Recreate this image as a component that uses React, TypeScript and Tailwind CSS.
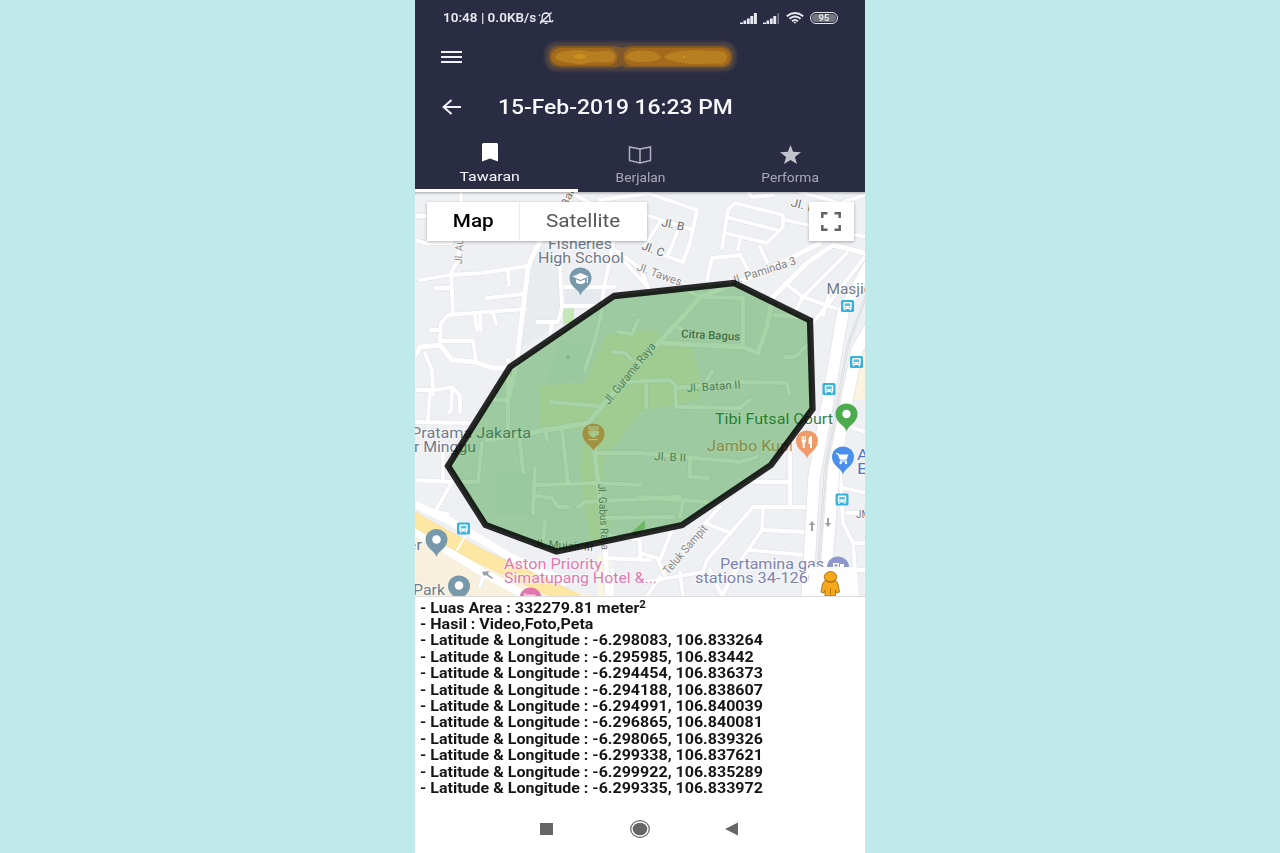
import React from "react";

const coordinates = [
  "-6.298083, 106.833264",
  "-6.295985, 106.83442",
  "-6.294454, 106.836373",
  "-6.294188, 106.838607",
  "-6.294991, 106.840039",
  "-6.296865, 106.840081",
  "-6.298065, 106.839326",
  "-6.299338, 106.837621",
  "-6.299922, 106.835289",
  "-6.299335, 106.833972",
];

const minorRoads = [
  "M415 216H430 M461 190V240L457 262L451 273L453 313",
  "M420 280L450 275L482 273L528 266 M435 288H451 M508 270L509 285 M487 298L523 294",
  "M440 342L441 323L448 315L525 309 M431 330H440 M475 315L477 330 M480 315L481 330 M493 313L496 324",
  "M440 341H473L476 360 M425 353L432 370L433 395 M415 390H435L452 387L460 396V412",
  "M415 240L425 243H452 M560 267L562 307L558 322H537 M565 287H615 M562 306H602 M602 310L595 340L585 370",
  "M615 235L603 293L602 310 M552 323L550 334 M590 232L615 250L640 268L647 285",
  "M653 195L697 210L690 243L683 262L660 254 M640 213L693 230 M678 230L668 255 M660 222L645 245",
  "M600 200L650 193 M570 192L590 203 M625 262L650 290",
  "M722 248L728 210L735 203L783 215V227L767 243L725 233 M730 218L777 230 M740 240L738 249 M760 247L767 262",
  "M707 280L712 258L740 255L748 270 M748 192L752 197L773 195 M800 192L840 203L865 195 M785 220L865 237",
  "M785 283L803 297L840 310 M847 253L803 297L793 315 M813 323L865 257 M823 315L830 290",
  "M700 297L743 298V347 M680 287L700 297L733 283 M677 327L690 333 M775 315L807 318 M785 357H795L807 345",
  "M626 382L670 380L675 385L676 407L740 408L750 400 M646 383V408 M675 388L740 382L787 383L789 394",
  "M707 380L712 371 M638 320L632 334L618 332 M614 352L625 353L632 360",
  "M508 360V430 M493 400H508 M551 402L598 406 M562 430L568 483 M520 440L523 472 M545 428L547 440",
  "M535 468L533 513 M537 485L598 483L640 485 M537 496L552 498L558 507H568 M578 507L585 502L680 497",
  "M595 453H640L740 462L757 457 M690 460V477L708 478 M482 443L478 482H462 M545 522L543 540 M602 518L673 517",
  "M640 497L707 502 M683 500L680 517 M430 390L428 422 M452 390L451 410L449 413 M415 422L468 423",
  "M415 480L452 482L435 512 M443 453V480 M753 482H790 M790 453V505",
  "M807 507H753L707 560L703 572L640 583 M763 507L762 530L743 557L722 596 M763 530L807 532 M750 550L803 555",
  "M720 507L705 523L728 532 M673 527L660 560 M640 553L657 558L665 575 M660 577L647 596 M680 573L683 596 M710 570L722 596",
  "M610 535L640 540V560 M605 558L650 560 M612 570V596 M840 465L843 523L853 543L857 596 M865 493L840 487 M847 513H865 M853 543H865 M855 570H865 M840 423L865 432",
  "M484 575L480 586 M435 512L448 514",
];

const mainRoads = [
  "M541 240L532 257L528 268L518 350L516 367L508 400",
  "M415 355L420 347L440 345L452 360L475 362L492 368H512",
  "M865 253L833 245L807 263L773 297L767 327L758 353L743 347L660 343",
  "M820 243L787 260L740 282L700 297L680 320L640 362L603 405L588 423L487 440",
  "M594 445L598 483L605 547L608 596",
];

const area = "614,296 734,283 810,320.5 812.5,409 771,465 682,525 556.5,551.5 485.5,525 448,466 510,367";

function Pin({ x, y, fill, children }: { x: number; y: number; fill: string; children?: React.ReactNode }) {
  return (
    <g transform={`translate(${x} ${y})`}>
      <path d="M0 16.5C-1 10.500-11 8-11-1A11 10.500 0 0 1 11-1C11 8 1 10.500 0 16.500Z" fill={fill} />
      {children}
    </g>
  );
}

function BusStop({ x, y }: { x: number; y: number }) {
  return (
    <g transform={`translate(${x} ${y})`}>
      <rect x="-6.5" y="-6" width="13" height="12" rx="1.5" fill="#35b3de" />
      <rect x="-4.2" y="-4" width="8.4" height="7" rx="1.2" fill="#fff" />
      <rect x="-2.8" y="-2.6" width="5.6" height="2.6" fill="#52bfe4" />
      <path d="M-2.7 1.6h1.2M1.5 1.6h1.2" stroke="#35b3de" strokeWidth="1" />
      <path d="M-3.6 3h1.6v1.3h-1.6zM2 3h1.6v1.3H2z" fill="#fff" />
    </g>
  );
}

type LabelProps = {
  x: number;
  y: number;
  w: number;
  size?: number;
  fill?: string;
  rotate?: number;
  weight?: number;
  children: string;
};

function Label({ x, y, w, size = 14, fill = "#6f7a8a", rotate = 0, weight = 400, children }: LabelProps) {
  return (
    <text
      transform={`translate(${x} ${y}) rotate(${rotate})`}
      textLength={w}
      lengthAdjust="spacingAndGlyphs"
      fontSize={size}
      fontWeight={weight}
      fill={fill}
      stroke="#fff"
      strokeOpacity="0.6"
      strokeWidth="2"
      strokeLinejoin="round"
      paintOrder="stroke"
    >
      {children}
    </text>
  );
}

function AreaMap() {
  return (
    <svg viewBox="415 192 450 404" className="block h-full w-full font-[Roboto,sans-serif]">
      <rect x="415" y="192" width="450" height="404" fill="#eff0f3" />
      <path d="M541 245L561 265V310L545 335L516 350L530 265Z" fill="#e8ecef" />
      <path d="M565 288H602V306H565Z" fill="#e6eaee" />
      <path d="M495 470H535V515H495ZM560 340L590 345L582 380L545 385Z" fill="#ebeef1" />
      <path d="M563 308H574V322L563 325Z" fill="#c5e8b7" />
      <path
        d="M605 335L650 330L690 345L700 375L700 400L655 408L640 412L620 440L605 455L600 500L612 520L605 545L590 540L580 470L585 430L540 428L540 385L585 383Z"
        fill="#f3f1dc"
      />
      <path d="M632 532L645 520V528L634 537Z" fill="#a8d29b" />
      <path d="M850 400L856 350L865 330V400Z" fill="#fbf3dd" />
      <path d="M415 532L560 596H415Z" fill="#f8f0dc" />
      <path d="M540 590L520 575L565 590L600 596H530Z" fill="#fbf1d8" />
      <path d="M598 555H612V596H598Z" fill="#fbf5e4" />

      <g fill="none" strokeLinecap="round" strokeLinejoin="round">
        {minorRoads.map((d) => (
          <path key={d} d={d} stroke="#e1e4e8" strokeWidth="5" />
        ))}
        {mainRoads.map((d) => (
          <path key={d} d={d} stroke="#e1e4e8" strokeWidth="6" />
        ))}
        {minorRoads.map((d) => (
          <path key={d} d={d} stroke="#fff" strokeWidth="3.8" />
        ))}
        {mainRoads.map((d) => (
          <path key={d} d={d} stroke="#fff" strokeWidth="5" />
        ))}
        <path d="M875 255L843 312L829 395L814 477L807 600" stroke="#dfe2e7" strokeWidth="13" />
        <path d="M880 310L857 350L848 395L834 467L824 600" stroke="#dfe2e7" strokeWidth="13" />
        <path d="M875 255L843 312L829 395L814 477L807 600" stroke="#fff" strokeWidth="11.5" />
        <path d="M880 310L857 350L848 395L834 467L824 600" stroke="#fff" strokeWidth="11.5" />
        <path d="M872 280L848 345L839 395L825 470L816 600" stroke="#d3d5d9" strokeWidth="2.2" />
        <path d="M872 280L848 345L839 395L825 470L816 600" stroke="#f5f5f5" strokeWidth="0.8" />
        <path d="M408 501L450 521L482 540L512 558L565 582" stroke="#fff" strokeWidth="7.5" />
        <path d="M408 528L440 546L482 572L530 598" stroke="#fff" strokeWidth="8" />
        <path d="M405 514L445 537L482 557L515 572L575 600" stroke="#f7dd93" strokeWidth="14.500" />
        <path d="M405 514L445 537L482 557L515 572L575 600" stroke="#fee6a3" strokeWidth="13" />
        <path d="M457 550L466 535" stroke="#fff" strokeWidth="2" />
      </g>
      <path d="M482 572l7-1-1 3 5 4-1 1-6-4-2 1z" fill="#9aa0a6" />
      <path d="M811 531v-6h-2l3-4 3 4h-2v6zM827 518v5h-2l3 4 3-4h-2v-5z" fill="#9aa0a6" />

      <Label x={548} y={248.5} w={64}>Fisheries</Label>
      <Label x={538} y={262.5} w={86}>High School</Label>
      <Label x={826.5} y={293.5} w={46}>Masjid</Label>
      <Label x={411} y={438} w={120}>Pratama Jakarta</Label>
      <Label x={414} y={452} w={62}>r Minggu</Label>
      <Label x={407} y={549.5} w={15}>er</Label>
      <Label x={413} y={594.5} w={32}>Park</Label>
      <Label x={504} y={568.5} w={98} fill="#e078b2">Aston Priority</Label>
      <Label x={504} y={582.5} w={153} fill="#e078b2">Simatupang Hotel &amp;...</Label>
      <Label x={715} y={423.5} w={118} fill="#3a7d48">Tibi Futsal Court</Label>
      <Label x={707} y={450.5} w={86} fill="#cf916c">Jambo Kupi</Label>
      <Label x={720} y={569} w={104} fill="#7b82b0">Pertamina gas</Label>
      <Label x={695} y={583} w={122} fill="#7b82b0">stations 34-1260</Label>
      <Label x={857} y={460} w={22} fill="#4f77c4">AB</Label>
      <Label x={857} y={474} w={22} fill="#4f77c4">Bu</Label>

      <Label x={661} y={226} w={23} size={11.5} rotate={12} fill="#666">Jl. B</Label>
      <Label x={641} y={249} w={23} size={11.5} rotate={20} fill="#666">Jl. C</Label>
      <Label x={636} y={270} w={47} size={11.5} rotate={20} fill="#8a8a8a">Jl. Tawes</Label>
      <Label x={732} y={285} w={68} size={11.5} rotate={-18} fill="#7d7d7d">Jl. Paminda 3</Label>
      <Label x={790} y={206} w={26} size={11.5} rotate={14} fill="#777">Jl. D</Label>
      <Label x={462} y={264} w={42} size={11} rotate={-87} fill="#888">Jl. Aurora</Label>
      <Label x={567} y={208} w={26} size={11} rotate={-65} fill="#777">Bara</Label>
      <Label x={681} y={337.5} w={59} size={11.5} rotate={3} weight={500} fill="#666">Citra Bagus</Label>
      <Label x={609} y={405} w={75} size={11.5} rotate={-51} fill="#7d7d7d">Jl. Gurame Raya</Label>
      <Label x={687} y={392} w={54} size={11} rotate={-4} fill="#7d7d7d">Jl. Batan II</Label>
      <Label x={654} y={460} w={32} size={11} rotate={3} fill="#7d7d7d">Jl. B II</Label>
      <Label x={598} y={484} w={66} size={11} rotate={87} fill="#7d7d7d">Jl. Gabus Raya</Label>
      <Label x={533} y={547} w={60} size={11} rotate={4} fill="#777">Jl. Mujair III</Label>
      <Label x={668} y={575} w={61} size={11.5} rotate={-49} fill="#858585">Teluk Sampit</Label>
      <Label x={856} y={518} w={14} size={11} fill="#777">JM</Label>

      <BusStop x={847.5} y={306} />
      <BusStop x={856.5} y={362} />
      <BusStop x={829} y={389} />
      <BusStop x={463.5} y={528.5} />
      <BusStop x={842} y={499.5} />

      <Pin x={580.5} y={279} fill="#7799ab">
        <path d="M0-6L8-2.5L0 1L-8-2.5ZM-4.5.3L0 2.3L4.5.3V3.5Q0 7-4.5 3.5ZM6.3-1.5h1V4h-1z" fill="#fff" />
      </Pin>
      <Pin x={593.5} y={435} fill="#f49b64">
        <path d="M-5.5-4h11v4h-2.200q-.8 2.500-3.300 2.500t-3.300-2.500h-1.200zM-5 4H4v1.300H-5z" fill="#f9ead0" />
      </Pin>
      <Pin x={846.5} y={415} fill="#4dab4d">
        <circle cy="-1" r="4.2" fill="#fff" />
      </Pin>
      <Pin x={807} y={442} fill="#f19a69">
        <path d="M-5.500-6v5q0 1.500 1.200 1.800V6h2V.8Q-1-.2-1-1v-5h-1v4h-.7v-4h-1.200v4h-.6v-4zM5-6Q1.500-6 1.500-2V2H3V6H5z" fill="#fff" />
      </Pin>
      <Pin x={843} y={458} fill="#4b8fec">
        <path d="M-7-5h2.300l.7 1.600H5.500L3.500 1.800H-3L-5.400-3.800H-7zM-3 2.500H4v1.200H-3.500z" fill="#fff" />
        <circle cx="-2.300" cy="5" r="1.200" fill="#fff" />
        <circle cx="3" cy="5" r="1.200" fill="#fff" />
      </Pin>
      <Pin x={436.500} y={540.500} fill="#7799ab">
        <circle cy="-1" r="4.300" fill="#fff" />
      </Pin>
      <Pin x={459} y={587} fill="#7799ab">
        <circle cy="-1.500" r="4.300" fill="#fff" />
      </Pin>
      <Pin x={530.500} y={599} fill="#e077b0" />
      <path d="M524 596v-3h1.500v1.500h10V596z" fill="#f6c9e1" />
      <Pin x={838} y={568} fill="#8d96cd">
        <path d="M-5-5h6v9h-6zM2-4h4v7H2z" fill="#fff" />
        <path d="M-3.500-3.500h3v2h-3z" fill="#7f8bcb" />
      </Pin>

      <polygon points={area} fill="#008000" fillOpacity="0.34" stroke="#000" strokeOpacity="0.84" strokeWidth="6.300" />
      <circle cx="568" cy="357" r="2" fill="#6daa78" opacity="0.6" />
      <path d="M588 426h11v4h-2q-.8 2.500-3.500 2.500t-3.500-2.500h-2zM589 434h9v1.300h-9z" fill="#a9cf98" opacity="0.500" />

      <rect x="809" y="567" width="46" height="29" fill="#fdfdfd" />
      <g fill="#f5a81c" stroke="#ad7413" strokeWidth="0.900">
        <path d="M826.500 580h8q2.500 1 3.500 4l1.500 8-3 1-1-3v6h-10.500v-6l-1 3-3-1 1.500-8q1-3 4-4z" />
        <ellipse cx="830.500" cy="577" rx="6.200" ry="5.500" />
      </g>
      <path d="M825 580q5.500 3.500 11 0" fill="none" stroke="#b87911" strokeWidth="1.200" />
      <path d="M830.500 588v8" stroke="#b87911" strokeWidth="1" />
    </svg>
  );
}

function MapPanel() {
  return (
    <div className="relative h-[404px] w-full overflow-hidden">
      <AreaMap />
      <div className="absolute inset-x-0 top-0 h-[3px] bg-gradient-to-b from-black/25 to-transparent" />
      <div className="absolute left-[12px] top-[9.500px] flex h-[39.500px] w-[219.500px] bg-white shadow-[0_1px_3px_rgba(0,0,0,0.3)]">
        <div className="flex w-[93px] items-center justify-center border-r border-[#ececec] pt-[2px] text-[18.500px] font-medium text-black">
          <span className="scale-x-[1.120]">Map</span>
        </div>
        <div className="flex flex-1 items-center justify-center pt-[2px] text-[18.500px] text-[#565656]">
          <span className="scale-x-[1.120]">Satellite</span>
        </div>
      </div>
      <div className="absolute left-[393.500px] top-[9.500px] flex h-[39.500px] w-[45.500px] items-center justify-center bg-white shadow-[0_1px_3px_rgba(0,0,0,0.3)]">
        <svg viewBox="0 0 20 19" className="h-[19px] w-[20px]" fill="none" stroke="#626262" strokeWidth="2.500">
          <path d="M1.300 6V1.300H6.500M13.500 1.300H18.700V6M18.700 13V17.700H13.500M6.500 17.700H1.300V13" />
        </svg>
      </div>
    </div>
  );
}

function StatusBar() {
  return (
    <div className="flex h-9 items-center justify-between pl-[28px] pr-[27px] text-[12.500px] font-semibold text-[#e8e9ee]">
      <div className="flex items-center">
        <span className="w-[95px] origin-left scale-x-[1.080] whitespace-nowrap">10:48 | 0.0KB/s</span>
        <svg viewBox="0 0 16 14" className="h-[14px] w-[16px]" fill="none" stroke="#e8e9ee" strokeWidth="1.300">
          <path d="M3 10.500H13L11.800 8.500V5.500Q11.500 2.200 8 2Q4.500 2.200 4.200 5.500V8.500ZM6.500 12.300H9.500M1 5L2 3.500M15 9L14 11" />
          <path d="M2 12.500L13.500 1.500" strokeWidth="1.500" />
        </svg>
      </div>
      <div className="flex items-center gap-[6px]">
        <svg viewBox="0 0 17 11" className="h-[11px] w-[17px]" fill="#e8e9ee">
          <path d="M0 9.500h3V11H0zM3.500 7.500h2.700V11H3.500zM7 5.500h2.700V11H7zM10.300 3h2.900v8h-2.900zM13.900 0h3v11h-3z" />
        </svg>
        <svg viewBox="0 0 17 11" className="h-[11px] w-[17px]" fill="#e8e9ee">
          <path d="M0 9.500h3V11H0zM3.500 7.500h2.700V11H3.500zM7 5.500h2.700V11H7zM10.300 3h2.900v8h-2.900z" />
          <path d="M14.500 0h1.500v11h-1.500z" opacity="0.400" />
        </svg>
        <svg viewBox="0 0 18 12" className="h-[12px] w-[18px]" fill="none" stroke="#e8e9ee" strokeWidth="1.900">
          <path d="M.8 4.200Q9-2.200 17.200 4.200M3.400 6.800Q9 2.200 14.600 6.800M6 9.200Q9 6.600 12 9.200" />
          <path d="M7.500 10L9 11.800L10.500 10Z" fill="#e8e9ee" stroke="none" />
        </svg>
        <div className="flex h-[11.500px] w-[28.500px] items-center justify-center rounded-full border-[1.500px] border-[#e8e9ee] bg-[#74757f] bg-clip-content p-px text-[8.500px] font-bold leading-none">
          <span className="scale-x-[1.100]">95</span>
        </div>
      </div>
    </div>
  );
}

function BlurredTitle() {
  return (
    <svg viewBox="540 38 200 38" className="h-[38px] w-[200px]">
      <defs>
        <filter id="halo" x="-10%" y="-60%" width="120%" height="220%">
          <feGaussianBlur stdDeviation="1.8" />
        </filter>
        <filter id="soft" x="-10%" y="-60%" width="120%" height="220%">
          <feGaussianBlur stdDeviation="0.5" />
        </filter>
      </defs>
      <rect x="545" y="42" width="191" height="29" rx="12" fill="#4e4540" filter="url(#halo)" />
      <g filter="url(#soft)">
        <path d="M557 46H612Q620 47 622 48Q625 46 634 46H722Q732 47 732.500 57Q732 67 722 67.500H634Q625 67.500 621 65.500Q618 67.500 610 67.500H560Q549 66 549 57Q549 48 557 46Z" fill="#80592a" />
        <path d="M560 48H609Q617 50 617.500 57Q617 64 609 65.500H560Q551 63 551 57Q551 50 560 48Z" fill="#a36b1d" />
        <path d="M632 48H722Q730 50 730.500 57Q730 65 722 66H632Q624 64 623.500 57Q624 50 632 48Z" fill="#a36b1d" />
        <path d="M555 57Q557 52 566 51L579 50L593 52L608 50.500Q615 52 615 57Q615 62 608 62.500L593 62L579 64.500L563 61.500Q557 61 555 57Z" fill="#b77e20" />
        <path d="M626 57Q628 51 640 50.500L651 51Q661 54 661 57Q661 60 650 62H638Q627 61 626 57Z" fill="#b77e20" />
        <path d="M664 57Q666 53 680 51L692 50L722 51Q727 53 727 57Q727 62 722 63.500L692 64L678 62Q665 60 664 57Z" fill="#b77e20" />
        <ellipse cx="580" cy="56.500" rx="6" ry="2.500" fill="#ca901e" />
        <circle cx="684" cy="57" r="1.200" fill="#cc9424" />
      </g>
    </svg>
  );
}

function Header() {
  return (
    <header className="flex h-[192px] flex-col bg-[#2a2c44]">
      <StatusBar />
      <div className="flex h-[41px] items-center pl-[26px]">
        <svg viewBox="0 0 21 13" className="h-[13px] w-[21px]" stroke="#f1f1f6" strokeWidth="2">
          <path d="M0 2H21M0 7H21M0 12H21" />
        </svg>
        <div className="ml-[78px]">
          <BlurredTitle />
        </div>
      </div>
      <div className="flex h-[60px] items-center pl-[27px]">
        <svg viewBox="0 0 19 16" className="h-[16px] w-[19px]" fill="none" stroke="#f4f4f8" strokeWidth="2">
          <path d="M19 8H2M9.500 .9L1.600 8L9.500 15.100" />
        </svg>
        <h1 className="ml-[36.500px] origin-left scale-x-[1.115] whitespace-nowrap text-[20.500px] font-medium text-[#f8f8fb]">
          15-Feb-2019 16:23 PM
        </h1>
      </div>
      <nav className="grid h-[55px] grid-cols-3 text-[13px]">
        <div className="flex flex-col items-center text-[#f6f6fa]">
          <svg viewBox="0 0 16 19" className="mt-[6px] h-[19px] w-[16px]" fill="#fff">
            <path d="M0 1.500Q0 0 1.500 0H14.500Q16 0 16 1.500V18.500L8 15.500L0 18.500Z" />
          </svg>
          <span className="mt-[5px] scale-x-[1.180] text-[13.500px] leading-[18px]">Tawaran</span>
        </div>
        <div className="flex flex-col items-center text-[#a8a9b6]">
          <svg viewBox="0 0 24 18" className="mt-[9px] h-[18px] w-[24px]" fill="none" stroke="#b0b1bc" strokeWidth="1.500">
            <path d="M12 3L1.500 1V14.500L12 17L22.500 14.500V1ZM12 3V17" />
          </svg>
          <span className="mt-[5px] scale-x-[1.060] leading-[18px]">Berjalan</span>
        </div>
        <div className="flex flex-col items-center text-[#a8a9b6]">
          <svg viewBox="0 0 21 19" className="mt-[8px] h-[19px] w-[21px]" fill="#c3c4cc">
            <path d="M10.500 0L13.100 6.800L21 7.300L14.900 11.900L17 19L10.500 15L4 19L6.100 11.900L0 7.300L7.900 6.800Z" />
          </svg>
          <span className="mt-[5px] scale-x-[1.060] leading-[18px]">Performa</span>
        </div>
      </nav>
      <div className="-mt-[3px] h-[3px] w-[163px] bg-white" />
    </header>
  );
}

export default function App() {
  return (
    <div className="flex h-[853px] w-full justify-center overflow-hidden bg-[#c0eae9] font-[Roboto,sans-serif]">
      <main className="flex w-[450px] flex-col overflow-hidden bg-white">
        <Header />
        <MapPanel />
        <section className="h-[208px] border-t border-[#dcdcdc] pl-[4.500px] pt-[2.500px] text-[14px] font-bold leading-[16.400px] text-[#151515]">
          <div className="w-max origin-left scale-x-[1.144]">
            <p>
              - Luas Area : 332279.81 meter<sup className="-top-[5px] text-[10px] leading-none">2</sup>
            </p>
            <p>- Hasil : Video,Foto,Peta</p>
            {coordinates.map((point) => (
              <p key={point}>- Latitude &amp; Longitude : {point}</p>
            ))}
          </div>
        </section>
        <footer className="flex h-[49px] items-center pl-[125px]">
          <div className="h-[12px] w-[13px] bg-[#666]" />
          <svg viewBox="0 0 20 18" className="ml-[77px] h-[18px] w-[20px]">
            <ellipse cx="10" cy="9" rx="9.300" ry="8.300" fill="none" stroke="#666" strokeWidth="1.200" />
            <ellipse cx="10" cy="9" rx="7.300" ry="6.300" fill="#666" />
          </svg>
          <svg viewBox="0 0 13 14" className="ml-[75px] h-[14px] w-[13px]" fill="#666">
            <path d="M0 7L13 .5V13.500Z" />
          </svg>
        </footer>
      </main>
    </div>
  );
}
